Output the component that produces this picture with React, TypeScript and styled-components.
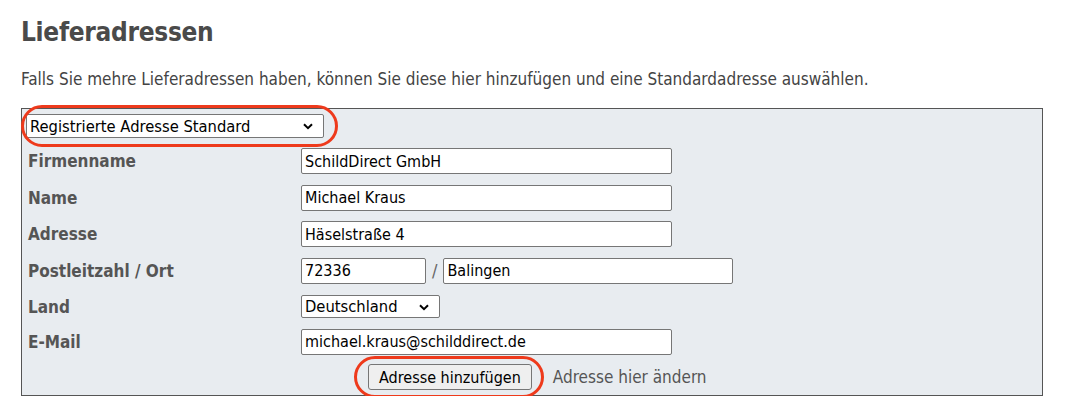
import React from "react";
import styled, { createGlobalStyle } from "styled-components";

const FONT = `"DejaVu Sans Condensed", "DejaVu Sans", sans-serif`;

const Global = createGlobalStyle`
  html, body { margin: 0; padding: 0; background: #ffffff; }
  body { font-family: ${FONT}; font-stretch: semi-condensed; color: #444; }
  * { box-sizing: border-box; }
`;

const Page = styled.div`
  padding: 0 0 0 21px;
  width: 1075px;
`;

const Title = styled.h1`
  margin: 0;
  padding-top: 16px;
  height: 50px;
  font-size: 26px;
  font-weight: bold;
  letter-spacing: -0.3px;
  color: #4a4a4a;
  line-height: 32px;
`;

const Intro = styled.p`
  margin: 0;
  height: 58px;
  padding-top: 17px;
  font-size: 17px;
  line-height: 24px;
  color: #444;
`;

const Box = styled.div`
  width: 1022px;
  border: 1px solid #555;
  background: #e8ecf0;
  padding: 0 0 0 4px;
`;

const Row = styled.div<{ $h: number }>`
  display: grid;
  grid-template-columns: 275px 1fr;
  align-items: center;
  height: ${(p) => p.$h}px;
`;

const FullCell = styled.div`
  grid-column: 1 / -1;
  justify-self: start;
  display: flex;
`;

const Label = styled.div`
  padding-left: 2px;
  font-size: 17px;
  font-weight: bold;
  color: #555;
`;

const Field = styled.div`
  display: flex;
  align-items: center;
  gap: 6px;
`;

const TextInput = styled.input<{ $w: number }>`
  width: ${(p) => p.$w}px;
  height: 26px;
  border: 1px solid #767676;
  border-radius: 2px;
  background: #fff;
  padding: 0 3px;
  font-family: ${FONT};
  font-stretch: semi-condensed;
  font-size: 16px;
  color: #000;
  outline: none;
`;

const Slash = styled.span`
  font-size: 18px;
  color: #666;
`;

const SelectWrap = styled.div<{ $w: number }>`
  position: relative;
  width: ${(p) => p.$w}px;
  flex: none;
`;

const Select = styled.select<{ $h: number }>`
  appearance: none;
  display: block;
  width: 100%;
  height: ${(p) => p.$h}px;
  border: 1px solid #767676;
  border-radius: 2px;
  background: #fff;
  padding: 0 24px 0 3px;
  font-family: ${FONT};
  font-stretch: semi-condensed;
  font-size: 16.4px;
  color: #000;
  outline: none;
`;

const Chevron = styled.svg`
  position: absolute;
  right: 11px;
  top: 50%;
  width: 10px;
  height: 7px;
  margin-top: -3px;
  pointer-events: none;
`;

const Annotated = styled.div`
  position: relative;
  display: inline-flex;
`;

const Ring = styled.div<{ $l: number; $r: number; $t: number; $b: number }>`
  position: absolute;
  left: ${(p) => -p.$l}px;
  right: ${(p) => -p.$r}px;
  top: ${(p) => -p.$t}px;
  bottom: ${(p) => -p.$b}px;
  border: 3.5px solid #ee3a1c;
  border-radius: 21px;
  pointer-events: none;
`;

const ButtonRow = styled.div`
  display: flex;
  align-items: center;
  height: 36px;
  padding-left: 342px;
  gap: 21px;
`;

const Button = styled.button`
  height: 26px;
  padding: 0 10px;
  border: 1px solid #767676;
  border-radius: 3px;
  background: #efefef;
  font-family: ${FONT};
  font-stretch: semi-condensed;
  font-size: 16px;
  color: #000;
`;

const LinkText = styled.span`
  font-size: 17px;
  color: #555;
`;

const ChevronIcon = () => (
  <Chevron viewBox="0 0 10 7">
    <path d="M1 1.2 L5 5.2 L9 1.2" fill="none" stroke="#000" strokeWidth="2" />
  </Chevron>
);

export default function App() {
  return (
    <Page>
      <Global />
      <Title>Lieferadressen</Title>
      <Intro>
        Falls Sie mehre Lieferadressen haben, können Sie diese hier hinzufügen und eine
        Standardadresse auswählen.
      </Intro>
      <Box>
        <Row $h={34}>
          <FullCell>
            <Annotated>
              <SelectWrap $w={298}>
                <Select $h={24} defaultValue="std">
                  <option value="std">Registrierte Adresse Standard</option>
                </Select>
                <ChevronIcon />
              </SelectWrap>
              <Ring $l={5} $r={14} $t={9} $b={9} />
            </Annotated>
          </FullCell>
        </Row>
        <Row $h={36}>
          <Label>Firmenname</Label>
          <Field>
            <TextInput $w={371} defaultValue="SchildDirect GmbH" />
          </Field>
        </Row>
        <Row $h={37}>
          <Label>Name</Label>
          <Field>
            <TextInput $w={371} defaultValue="Michael Kraus" />
          </Field>
        </Row>
        <Row $h={36}>
          <Label>Adresse</Label>
          <Field>
            <TextInput $w={371} defaultValue="Häselstraße 4" />
          </Field>
        </Row>
        <Row $h={37}>
          <Label>Postleitzahl / Ort</Label>
          <Field>
            <TextInput $w={125} defaultValue="72336" />
            <Slash>/</Slash>
            <TextInput $w={290} defaultValue="Balingen" />
          </Field>
        </Row>
        <Row $h={35}>
          <Label>Land</Label>
          <Field>
            <SelectWrap $w={139}>
              <Select $h={23} defaultValue="de">
                <option value="de">Deutschland</option>
              </Select>
              <ChevronIcon />
            </SelectWrap>
          </Field>
        </Row>
        <Row $h={35}>
          <Label>E-Mail</Label>
          <Field>
            <TextInput $w={371} defaultValue="michael.kraus@schilddirect.de" />
          </Field>
        </Row>
        <ButtonRow>
          <Annotated>
            <Button>Adresse hinzufügen</Button>
            <Ring $l={14} $r={12} $t={8} $b={8} />
          </Annotated>
          <LinkText>Adresse hier ändern</LinkText>
        </ButtonRow>
      </Box>
    </Page>
  );
}
